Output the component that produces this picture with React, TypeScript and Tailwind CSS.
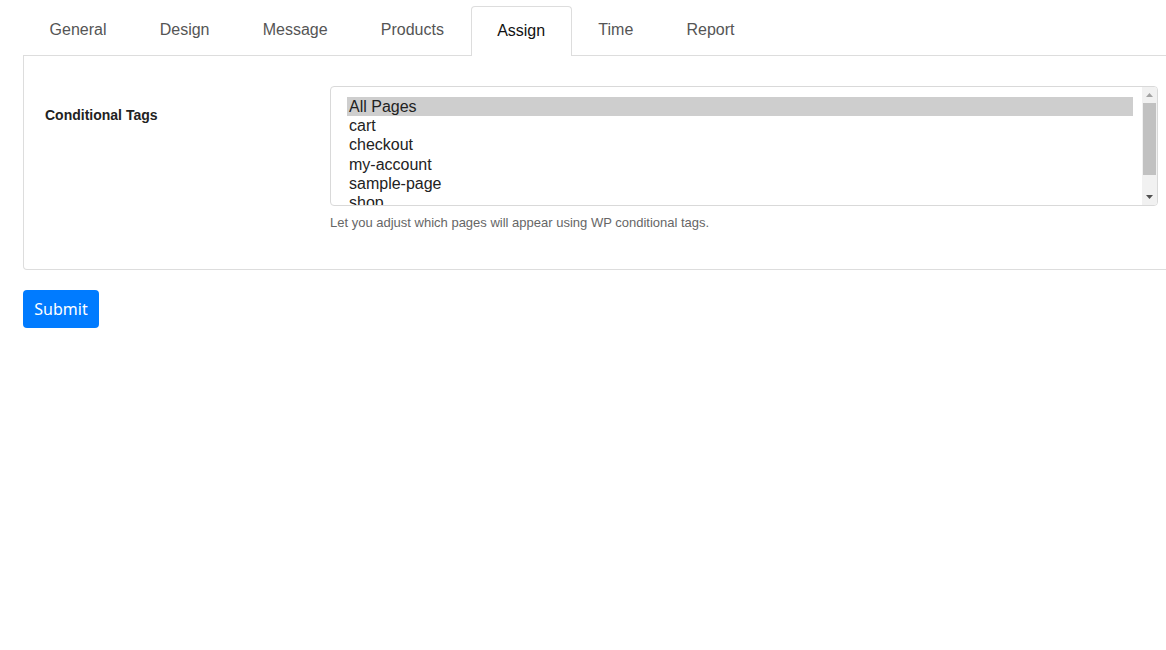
import React from 'react';

const tabs = ['General', 'Design', 'Message', 'Products', 'Assign', 'Time', 'Report'];
const pages = ['All Pages', 'cart', 'checkout', 'my-account', 'sample-page', 'shop'];

const App: React.FC = () => {
  return (
    <div className="w-[1166px] h-[650px] overflow-hidden bg-white font-['Liberation_Sans',Arial,sans-serif]">
      <div className="pl-[23px] pt-[6px]">
        {/* tabs */}
        <ul className="flex w-[1200px] border-b border-[#dddddd]">
          {tabs.map((tab) => {
            const active = tab === 'Assign';
            return (
              <li
                key={tab}
                className={
                  active
                    ? '-mb-px h-[50px] px-[25.6px] border border-b-0 border-[#dddddd] rounded-t-[4px] bg-white text-[16px] leading-[48px] text-[#111111]'
                    : 'h-[49px] px-[25.6px] border border-transparent text-[16px] leading-[46px] text-[#555555]'
                }
              >
                {tab}
              </li>
            );
          })}
        </ul>

        {/* panel */}
        <div className="w-[1200px] h-[214px] border border-t-0 border-[#dddddd] rounded-b-[4px] pt-[30px] pl-[21px]">
          <div className="flex">
            <div className="w-[285px] pt-[21px] text-[14px] leading-[16px] font-bold text-[#222222]">
              Conditional Tags
            </div>
            <div>
              <div className="flex w-[828px] h-[120px] border border-[#d9d9d9] rounded-[4px] overflow-hidden">
                <ul className="flex-1 pl-[16px] pr-[9px] pt-[10px] text-[16px] leading-[19.2px] text-[#222222]">
                  {pages.map((p, i) => (
                    <li key={p} className={i === 0 ? 'px-[2px] bg-[#cecece]' : 'px-[2px]'}>
                      {p}
                    </li>
                  ))}
                </ul>
                <div className="flex flex-col w-[15px] bg-[#f1f1f1]">
                  <div className="h-[16px] flex items-center justify-center">
                    <svg width="7" height="4" viewBox="0 0 7 4">
                      <path d="M3.5 0 L7 4 L0 4 Z" fill="#a3a3a3" />
                    </svg>
                  </div>
                  <div className="mx-[1px] h-[72px] bg-[#c1c1c1]" />
                  <div className="flex-1" />
                  <div className="h-[16px] flex items-center justify-center">
                    <svg width="7" height="4" viewBox="0 0 7 4">
                      <path d="M0 0 L7 0 L3.5 4 Z" fill="#505050" />
                    </svg>
                  </div>
                </div>
              </div>
              <p className="mt-[9px] text-[13px] leading-[15px] text-[#666666]">
                Let you adjust which pages will appear using WP conditional tags.
              </p>
            </div>
          </div>
        </div>

        <button className="mt-[20px] w-[76px] h-[38px] rounded-[4px] bg-[#007bff] text-white text-[16px] font-['Noto_Sans',sans-serif]">
          Submit
        </button>
      </div>
    </div>
  );
};

export default App;
